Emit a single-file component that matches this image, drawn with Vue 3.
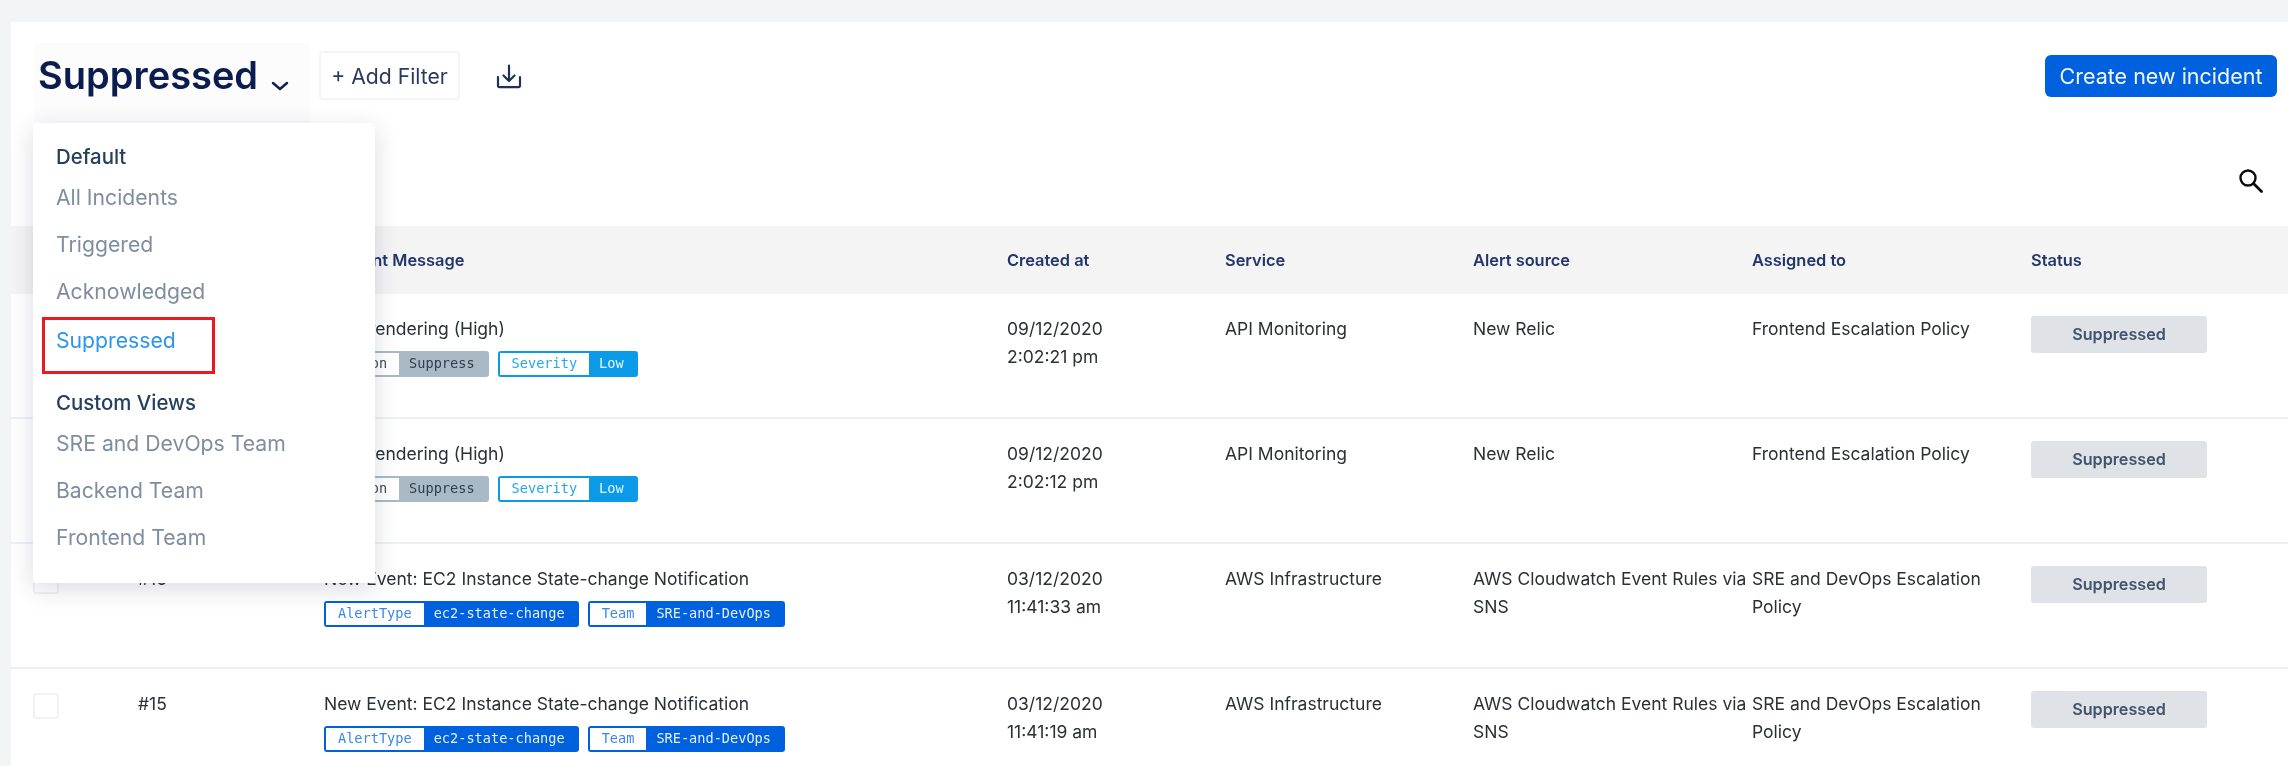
<template>
  <div class="page">
    <div class="panel">
      <div class="toolbar">
        <div class="view-title">
          <span class="view-title__text">Suppressed</span>
          <svg class="chevron" width="18" height="10" viewBox="0 0 18 10" fill="none">
            <path d="M2 2l7 6 7-6" stroke="#0d1f4f" stroke-width="2.4" stroke-linecap="round" stroke-linejoin="round" />
          </svg>
        </div>
        <button class="add-filter">+ Add Filter</button>
        <svg class="download" width="26" height="25" viewBox="0 0 26 25" fill="none">
          <path d="M13 1.5v15M7.5 11.5l5.5 5.5 5.5-5.5" stroke="#1f3156" stroke-width="2.2" stroke-linecap="round" stroke-linejoin="round" />
          <path d="M2 13v8.5c0 1 .7 1.7 1.7 1.7h18.6c1 0 1.7-.7 1.7-1.7V13" stroke="#1f3156" stroke-width="2.2" stroke-linecap="round" />
        </svg>
        <button class="create">Create new incident</button>
      </div>

      <div class="search-row">
        <svg width="25" height="25" viewBox="0 0 25 25" fill="none">
          <circle cx="10" cy="10" r="7.5" stroke="#0b0b0b" stroke-width="2.4" />
          <path d="M15.5 15.5l8 8" stroke="#0b0b0b" stroke-width="2.8" stroke-linecap="round" />
        </svg>
      </div>

      <div class="row row--head">
        <span></span>
        <span>#</span>
        <span>Incident Message</span>
        <span>Created at</span>
        <span>Service</span>
        <span>Alert source</span>
        <span>Assigned to</span>
        <span class="status-head">Status</span>
      </div>

      <div v-for="item in incidents" :key="item.id" class="row">
        <span class="check"></span>
        <span>#{{ item.id }}</span>
        <div>
          <div>{{ item.message }}</div>
          <div class="tags">
            <span v-for="tag in item.tags" :key="tag.label" class="tag" :class="'tag--' + tag.kind">
              <span class="tag__label">{{ tag.label }}</span>
              <span class="tag__value">{{ tag.value }}</span>
            </span>
          </div>
        </div>
        <div>{{ item.date }}<br />{{ item.time }}</div>
        <div>{{ item.service }}</div>
        <div class="wrap">{{ item.source }}</div>
        <div class="wrap">{{ item.assigned }}</div>
        <div class="status">Suppressed</div>
      </div>
    </div>

    <div class="menu">
      <div class="menu__head">Default</div>
      <div class="menu__item">All Incidents</div>
      <div class="menu__item">Triggered</div>
      <div class="menu__item">Acknowledged</div>
      <div class="menu__item menu__item--active">Suppressed</div>
      <div class="menu__head menu__head--second">Custom Views</div>
      <div class="menu__item">SRE and DevOps Team</div>
      <div class="menu__item">Backend Team</div>
      <div class="menu__item">Frontend Team</div>
      <div class="marker"></div>
    </div>
  </div>
</template>

<script setup>
const renderTags = [
  { label: "Action", value: "Suppress", kind: "grey" },
  { label: "Severity", value: "Low", kind: "sky" },
];
const ec2Tags = [
  { label: "AlertType", value: "ec2-state-change", kind: "blue" },
  { label: "Team", value: "SRE-and-DevOps", kind: "blue" },
];
const frontend = "Frontend Escalation Policy";
const sre = "SRE and DevOps Escalation Policy";
const cloudwatch = "AWS Cloudwatch Event Rules via SNS";
const ec2Message = "New Event: EC2 Instance State-change Notification";

const incidents = [
  { id: 18, message: "Slow rendering (High)", tags: renderTags, date: "09/12/2020", time: "2:02:21 pm", service: "API Monitoring", source: "New Relic", assigned: frontend },
  { id: 17, message: "Slow rendering (High)", tags: renderTags, date: "09/12/2020", time: "2:02:12 pm", service: "API Monitoring", source: "New Relic", assigned: frontend },
  { id: 16, message: ec2Message, tags: ec2Tags, date: "03/12/2020", time: "11:41:33 am", service: "AWS Infrastructure", source: cloudwatch, assigned: sre },
  { id: 15, message: ec2Message, tags: ec2Tags, date: "03/12/2020", time: "11:41:19 am", service: "AWS Infrastructure", source: cloudwatch, assigned: sre },
];
</script>

<style scoped>
.page {
  position: relative;
  height: 766px;
  overflow: hidden;
  box-sizing: border-box;
  padding: 22px 0 0 11px;
  background: #f3f4f6;
  font-family: Inter, "Noto Sans", sans-serif;
  font-size: 17.5px;
  color: #2b2f36;
  filter: blur(0.45px);
}

.panel {
  background: #fff;
  height: 744px;
  overflow: hidden;
}

.toolbar {
  display: flex;
  align-items: flex-start;
  height: 101px;
  box-sizing: border-box;
  padding: 21px 11px 0 23px;
}

.view-title {
  display: flex;
  width: 276px;
  height: 80px;
  box-sizing: border-box;
  padding: 12px 0 0 4px;
  background: #fcfcfd;
}

.view-title__text {
  font-size: 38px;
  line-height: 40px;
  font-weight: 600;
  color: #0b1d4e;
}

.chevron {
  margin: 26px 0 0 13px;
}

.add-filter {
  width: 141px;
  height: 49px;
  margin: 8px 0 0 9px;
  padding: 0;
  border: 2px solid #f3f4f6;
  border-radius: 4px;
  background: #fff;
  font: inherit;
  font-size: 21.2px;
  color: #2a3a5c;
}

.download {
  margin: 21px 0 0 36px;
}

.create {
  width: 232px;
  height: 42px;
  margin: 12px 0 0 auto;
  padding: 0;
  border: 0;
  border-radius: 6px;
  background: #0061de;
  font: inherit;
  font-size: 21.5px;
  color: #f3f7fd;
}

.search-row {
  display: flex;
  justify-content: flex-end;
  height: 103px;
  box-sizing: border-box;
  padding: 45px 25px 0 0;
}

.row {
  display: grid;
  grid-template-columns: 105px 186px 683px 218px 248px 279px 278px 1fr;
  height: 125px;
  box-sizing: border-box;
  padding: 21px 0 0 22px;
  border-bottom: 2px solid #edf1f6;
  line-height: 28px;
}

.row--head {
  height: 68px;
  padding-top: 20px;
  border-bottom: 0;
  background: #f4f4f5;
  font-weight: 600;
  font-size: 16.4px;
  color: #22366c;
}

.status-head {
  margin-left: 1px;
}

.check {
  width: 26px;
  height: 26px;
  box-sizing: border-box;
  margin-top: 3px;
  border: 2px solid #f1f2f4;
  border-radius: 3px;
}

.wrap {
  padding-right: 4px;
}

.tags {
  display: flex;
  gap: 9px;
  margin-top: 8px;
}

.tag {
  display: flex;
  height: 26px;
  box-sizing: border-box;
  border: 2px solid var(--tag);
  border-radius: 3px;
  font-family: "DejaVu Sans Mono", monospace;
  font-size: 13.6px;
  line-height: 21px;
  white-space: nowrap;
}

.tag--blue {
  --tag: #0061de;
  --label: #3b86ec;
  --value: #e4eefc;
}

.tag--sky {
  --tag: #0a9ae8;
  --label: #25a7ef;
  --value: #e6f6ff;
}

.tag--grey {
  --tag: #a9b9c5;
  --label: #3c4a5c;
  --value: #2f3d50;
}

.tag__label {
  padding: 0 12px;
  background: #fff;
  color: var(--label);
}

.tag__value {
  padding: 0 12px 0 10px;
  background: var(--tag);
  color: var(--value);
}

.status {
  width: 176px;
  height: 37px;
  margin: 1px 0 0 1px;
  border-radius: 3px;
  background: #dfe3e8;
  text-align: center;
  line-height: 37px;
  font-size: 16.2px;
  font-weight: 600;
  color: #42536b;
}

.menu {
  position: absolute;
  top: 123px;
  left: 33px;
  width: 342px;
  height: 460px;
  box-sizing: border-box;
  padding: 17px 0 0 23px;
  border-radius: 3px;
  background: #fff;
  box-shadow: 0 6px 24px rgba(30, 40, 60, 0.16);
}

.menu__head {
  height: 34px;
  line-height: 34px;
  font-size: 20.4px;
  font-weight: 500;
  color: #24405f;
}

.menu__head--second {
  margin-top: 24px;
}

.menu__item {
  height: 47px;
  line-height: 47px;
  font-size: 21.2px;
  color: #7f8da0;
}

.menu__item--active {
  margin-top: 2px;
  margin-bottom: -2px;
  color: #2b96ea;
}

.marker {
  position: absolute;
  top: 194px;
  left: 9px;
  width: 173px;
  height: 57px;
  box-sizing: border-box;
  border: 3px solid #ea1a20;
}
</style>
